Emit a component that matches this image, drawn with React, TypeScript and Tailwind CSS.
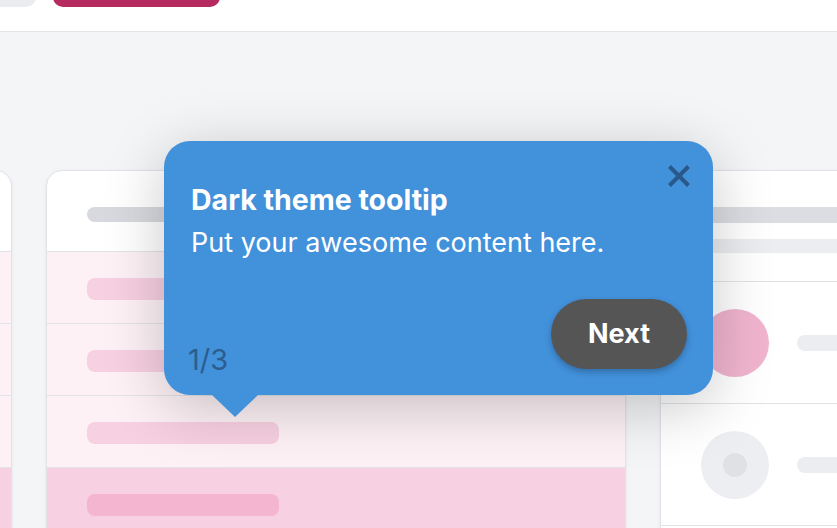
import React from 'react';

const ListCard: React.FC = () => {
  const rows = ['light', 'light', 'light', 'dark'];
  return (
    <div className="w-[580px] shrink-0 h-[420px] rounded-t-2xl border border-[#e2e3e8] bg-white shadow-[0_1px_4px_rgba(0,0,0,0.06)] overflow-hidden">
      <div className="h-[81px] border-b border-[#e2e3e8] pt-[36px] pl-[40px]">
        <div className="h-[15px] w-[260px] rounded-full bg-[#d8d9de]" />
      </div>
      {rows.map((tone, i) => (
        <div
          key={i}
          className={`h-[72px] border-b border-[#e2e3e8] pt-[26px] pl-[40px] ${
            tone === 'dark' ? 'bg-[#f7d0e2]' : 'bg-[#fdf1f5]'
          }`}
        >
          <div
            className={`h-[22px] w-[192px] rounded-[8px] ${
              tone === 'dark' ? 'bg-[#f4b5d0]' : 'bg-[#f7d0e1]'
            }`}
          />
        </div>
      ))}
    </div>
  );
};

const AvatarCard: React.FC = () => (
  <div className="w-[580px] shrink-0 h-[420px] rounded-t-2xl border border-[#e2e3e8] bg-white shadow-[0_1px_4px_rgba(0,0,0,0.06)] overflow-hidden">
    <div className="h-[111px] border-b border-[#e2e3e8] pt-[36px] pl-[40px] flex flex-col gap-[16px]">
      <div className="h-[16px] w-[520px] bg-[#dcdde2]" />
      <div className="h-[14px] w-[520px] bg-[#ecedf1]" />
    </div>
    <div className="h-[122px] border-b border-[#e2e3e8] pl-[40px] flex items-center gap-[28px]">
      <div className="h-[68px] w-[68px] rounded-full bg-[#f1b4cf]" />
      <div className="h-[16px] w-[300px] rounded-full bg-[#ecedf1]" />
    </div>
    <div className="h-[122px] border-b border-[#e2e3e8] pl-[40px] flex items-center gap-[28px]">
      <div className="h-[68px] w-[68px] rounded-full bg-[#edeef2] flex items-center justify-center">
        <div className="h-[24px] w-[24px] rounded-full bg-[#e0e1e5]" />
      </div>
      <div className="h-[16px] w-[300px] rounded-full bg-[#ecedf1]" />
    </div>
  </div>
);

const Tooltip: React.FC = () => (
  <div className="absolute left-[164px] top-[141px] w-[549px] h-[254px] rounded-[26px] bg-[#4291db] shadow-[0_12px_60px_rgba(0,0,0,0.22)] flex flex-col pt-[43px] pl-[27px] pr-[26px] pb-[26px] text-white">
    <button className="absolute right-[23px] top-[24px] h-[22px] w-[22px]">
      <svg width="22" height="22" viewBox="0 0 22 22">
        <path d="M1.5 1.5 20.5 20.5 M20.5 1.5 1.5 20.5" stroke="#29598a" strokeWidth="4.2" fill="none" />
      </svg>
    </button>
    <h3 className="text-[28.5px] leading-[32px] font-bold">Dark theme tooltip</h3>
    <p className="mt-[11px] text-[27px] leading-[32px]">Put your awesome content here.</p>
    <div className="mt-auto flex items-end justify-between">
      <span className="-mb-[7px] -ml-[3px] text-[29px] leading-[32px] text-[#2c5d8e]">1/3</span>
      <button className="h-[70px] w-[136px] rounded-full bg-[#555555] text-[27px] font-bold text-white shadow-[0_3px_6px_rgba(0,0,0,0.25)]">
        Next
      </button>
    </div>
    <div className="absolute left-[48px] top-full h-0 w-0 border-x-[23px] border-t-[22px] border-x-transparent border-t-[#4291db]" />
  </div>
);

export default function App() {
  return (
    <div className="relative h-[528px] w-[837px] overflow-hidden bg-[#f4f5f7] font-[Inter,'Noto_Sans',sans-serif]">
      <header className="h-[32px] bg-white border-b border-[#e2e4e8] flex gap-[17px]">
        <div className="-mt-[33px] -ml-[64px] h-[40px] w-[100px] rounded-[10px] bg-[#ebecf0]" />
        <div className="-mt-[33px] h-[40px] w-[167px] rounded-[10px] bg-[#b52a5f]" />
      </header>
      <main className="flex gap-[34px] pt-[138px] -ml-[568px]">
        <ListCard />
        <ListCard />
        <AvatarCard />
      </main>
      <Tooltip />
    </div>
  );
}
